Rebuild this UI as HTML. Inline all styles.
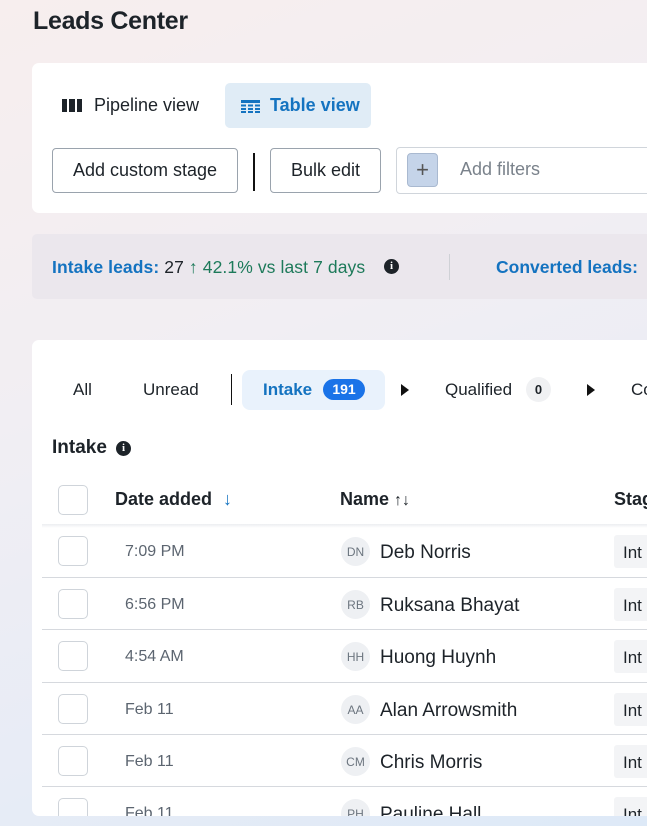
<!DOCTYPE html>
<html><head><style>
*{box-sizing:border-box;margin:0;padding:0}
body{width:647px;height:826px;overflow:hidden;font-family:"Liberation Sans",sans-serif;color:#1d2329;
background:linear-gradient(160deg,#f7eeee 0%,#f1eef3 40%,#e7ecf6 75%,#dde9f7 100%);position:relative}
.abs{position:absolute}
.card{position:absolute;background:#fff;border-radius:7px}
.btn{position:absolute;border:1px solid #9aa3ad;border-radius:4px;background:#fff;font-size:17px;display:flex;align-items:center;justify-content:center;color:#1d2329}
.cb{position:absolute;left:26px;width:30px;height:30px;border:1px solid #cfd4da;border-radius:5px;background:#fff}
.row{position:absolute;left:10px;width:620px;height:52px;border-top:1px solid #d6d9de}
.t{position:absolute;left:83px;top:18px;font-size:16px;color:#5c6570}
.av{position:absolute;left:299px;top:12px;width:29px;height:29px;border-radius:50%;background:#eef0f3;font-size:12px;color:#6c757f;display:flex;align-items:center;justify-content:center}
.nm{position:absolute;left:338px;top:17px;font-size:19px;color:#1d2329}
.st{position:absolute;left:572px;top:10px;width:60px;height:33px;background:#f3f4f6;border-radius:3px;font-size:17px;padding:8px 0 0 9px;color:#1d2329}
</style></head><body>
<div class="abs" style="left:33px;top:7px;font-size:25px;font-weight:bold;letter-spacing:-0.3px">Leads Center</div>

<div class="card" style="left:32px;top:63px;width:630px;height:150px">
  <div class="abs" style="left:30px;top:36px;width:20px;height:13px;display:flex;gap:2px"><i style="flex:1;background:#1d2329"></i><i style="flex:1;background:#1d2329"></i><i style="flex:1;background:#1d2329"></i></div>
  <div class="abs" style="left:62px;top:32px;font-size:18px">Pipeline view</div>
  <div class="abs" style="left:193px;top:20px;width:146px;height:45px;background:#e0ecf6;border-radius:5px"></div>
  <svg class="abs" style="left:209px;top:37px" width="19" height="13"><rect width="19" height="3" fill="#1473c0"/><g fill="#1473c0"><rect y="4.5" width="5" height="2"/><rect x="7" y="4.5" width="5" height="2"/><rect x="14" y="4.5" width="5" height="2"/><rect y="8" width="5" height="2"/><rect x="7" y="8" width="5" height="2"/><rect x="14" y="8" width="5" height="2"/><rect y="11" width="5" height="2"/><rect x="7" y="11" width="5" height="2"/><rect x="14" y="11" width="5" height="2"/></g></svg>
  <div class="abs" style="left:238px;top:32px;font-size:18px;font-weight:bold;color:#1473c0">Table view</div>
  <div class="btn" style="left:20px;top:85px;width:186px;height:45px;font-size:18px">Add custom stage</div>
  <div class="abs" style="left:221px;top:90px;width:2px;height:38px;background:#111"></div>
  <div class="btn" style="left:238px;top:85px;width:111px;height:45px;font-size:18px">Bulk edit</div>
  <div class="abs" style="left:364px;top:84px;width:270px;height:47px;border:1px solid #d0d5db;border-radius:4px"></div>
  <div class="abs" style="left:375px;top:90px;width:31px;height:34px;background:#c5d4e9;border:1px solid #a9b9d0;border-radius:4px;color:#555;font-size:22px;text-align:center;line-height:31px">+</div>
  <div class="abs" style="left:428px;top:96px;font-size:18px;color:#7a828b">Add filters</div>
</div>

<div class="abs" style="left:32px;top:234px;width:630px;height:65px;background:#ebe7ed;border-radius:5px">
  <div class="abs" style="left:20px;top:23px;font-size:17.5px;white-space:nowrap;letter-spacing:0.1px"><b style="color:#1473c0">Intake leads:</b> 27 <span style="color:#1d7a5a">↑ 42.1% vs last 7 days</span></div>
  <div class="abs" style="left:352px;top:25px;width:15px;height:15px;border-radius:50%;background:#1d2329;color:#fff;font-size:11px;font-weight:bold;text-align:center;line-height:15px;font-family:'Liberation Serif',serif">i</div>
  <div class="abs" style="left:417px;top:20px;width:1px;height:26px;background:#cfd1d6"></div>
  <div class="abs" style="left:464px;top:23px;font-size:17.5px;font-weight:bold;color:#1473c0;white-space:nowrap">Converted leads:</div>
</div>

<div class="card" style="left:32px;top:340px;width:630px;height:476px;overflow:hidden">
  <div class="abs" style="left:41px;top:40px;font-size:17px">All</div>
  <div class="abs" style="left:111px;top:40px;font-size:17px">Unread</div>
  <div class="abs" style="left:199px;top:34px;width:1px;height:31px;background:#111"></div>
  <div class="abs" style="left:210px;top:30px;width:143px;height:40px;background:#e9f2fc;border-radius:8px"></div>
  <div class="abs" style="left:231px;top:40px;font-size:17px;color:#1473c0;font-weight:bold">Intake</div>
  <div class="abs" style="left:291px;top:39px;width:42px;height:21px;background:#1a73e8;border-radius:11px;color:#fff;font-size:14px;font-weight:bold;text-align:center;line-height:21px">191</div>
  <div class="abs" style="left:369px;top:44px;width:0;height:0;border-left:8px solid #111;border-top:6px solid transparent;border-bottom:6px solid transparent"></div>
  <div class="abs" style="left:413px;top:40px;font-size:17px">Qualified</div>
  <div class="abs" style="left:494px;top:37px;width:25px;height:25px;background:#f0f1f3;border-radius:50%;font-size:13px;font-weight:bold;text-align:center;line-height:25px">0</div>
  <div class="abs" style="left:555px;top:44px;width:0;height:0;border-left:8px solid #111;border-top:6px solid transparent;border-bottom:6px solid transparent"></div>
  <div class="abs" style="left:599px;top:40px;font-size:17px">Co</div>

  <div class="abs" style="left:20px;top:97px;font-size:19px;font-weight:bold">Intake</div>
  <div class="abs" style="left:84px;top:101px;width:15px;height:15px;border-radius:50%;background:#1d2329;color:#fff;font-size:11px;font-weight:bold;text-align:center;line-height:15px;font-family:'Liberation Serif',serif">i</div>

  <div class="cb" style="top:145px"></div>
  <div class="abs" style="left:83px;top:149px;font-size:18px;font-weight:bold">Date added <span style="color:#1473c0;font-weight:normal;margin-left:6px">↓</span></div>
  <div class="abs" style="left:308px;top:149px;font-size:18px;font-weight:bold">Name <span style="font-weight:normal;font-size:16px">↑↓</span></div>
  <div class="abs" style="left:582px;top:149px;font-size:18px;font-weight:bold">Stag</div>
  <div class="abs" style="left:10px;top:184px;width:620px;height:4px;background:linear-gradient(#eceef1,#fff)"></div>

  <div class="row" style="top:185px;border-top:none"><div class="cb" style="left:16px;top:11px"></div><div class="t">7:09 PM</div><div class="av">DN</div><div class="nm">Deb Norris</div><div class="st">Int</div></div>
  <div class="row" style="top:237px"><div class="cb" style="left:16px;top:11px"></div><div class="t">6:56 PM</div><div class="av">RB</div><div class="nm">Ruksana Bhayat</div><div class="st">Int</div></div>
  <div class="row" style="top:289px"><div class="cb" style="left:16px;top:11px"></div><div class="t">4:54 AM</div><div class="av">HH</div><div class="nm">Huong Huynh</div><div class="st">Int</div></div>
  <div class="row" style="top:342px"><div class="cb" style="left:16px;top:11px"></div><div class="t">Feb 11</div><div class="av">AA</div><div class="nm">Alan Arrowsmith</div><div class="st">Int</div></div>
  <div class="row" style="top:394px"><div class="cb" style="left:16px;top:11px"></div><div class="t">Feb 11</div><div class="av">CM</div><div class="nm">Chris Morris</div><div class="st">Int</div></div>
  <div class="row" style="top:446px"><div class="cb" style="left:16px;top:11px"></div><div class="t">Feb 11</div><div class="av">PH</div><div class="nm">Pauline Hall</div><div class="st">Int</div></div>
</div>
</body></html>
